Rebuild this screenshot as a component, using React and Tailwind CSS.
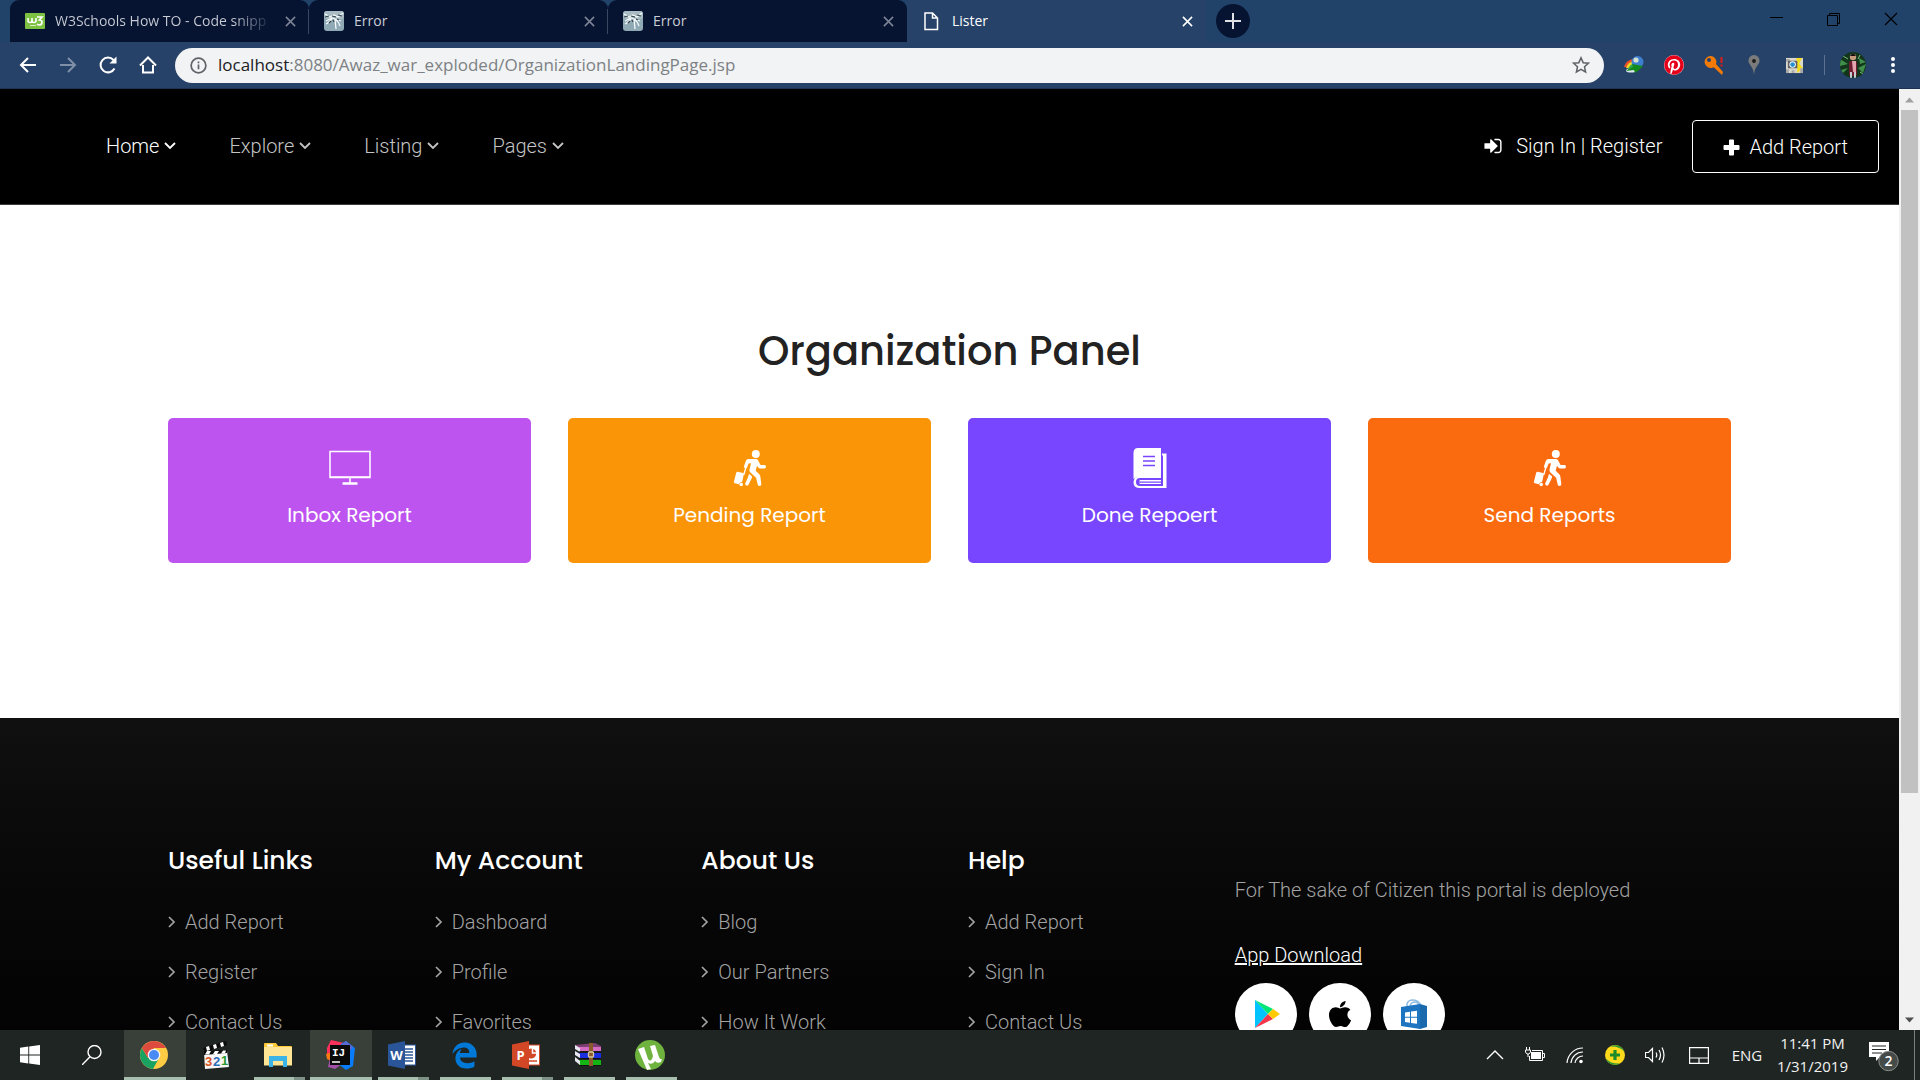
import React from 'react';
import { FaApple, FaEdgeLegacy, FaPinterest } from 'react-icons/fa';

/* ---------- Browser chrome icons ---------- */

function W3Favicon() {
  return (
    <svg viewBox="0 0 20 16" className="h-4 w-5 shrink-0">
      <rect width="20" height="16" rx="1" fill="#7cc142" />
      <path d="M3 5v2.500q0 2 2 2t2-2V5v2.500q0 2 2 2t2-2V5" fill="none" stroke="#fff" strokeWidth="1.600" />
      <path d="M12 4h5l-2.500 3q2.500 0 2.500 2.300T14.500 12q-1.500 0-2.500-1" fill="none" stroke="#fff" strokeWidth="1.700" />
      <path d="M5 12.500h6" stroke="#d7efbd" strokeWidth="1" />
    </svg>
  );
}

function ServerFavicon() {
  return (
    <svg viewBox="0 0 20 20" className="h-5 w-5 shrink-0">
      <rect width="20" height="20" rx="3" fill="#8fa9b5" />
      <rect width="20" height="8" rx="3" fill="#a9bcc4" />
      <path d="M1 3l5 3 4-2 4 2 5-4M2 10l6-3 3 1 6 2M8 8q-4 4-6 5M11 8l1 10M12 9q3 2 4 6" fill="none" stroke="#f4fafb" strokeWidth="1.300" />
      <path d="M1 6l4-1M8 5l4 1M14 4l4 1M5 12l2-2M9 9l1 2M13 8l2 1" stroke="#34454e" strokeWidth="1.200" />
    </svg>
  );
}

function PageFavicon() {
  return (
    <svg viewBox="0 0 20 20" className="h-5 w-5 shrink-0" fill="none" stroke="#fff" strokeWidth="1.500">
      <path d="M3 2h7.500l5 5v11.500H3zM10.500 2v5h5" />
    </svg>
  );
}

function CloseX({ className }) {
  return (
    <svg viewBox="0 0 12 12" className={className} stroke="currentColor" strokeWidth="1.700" fill="none">
      <path d="M1 1l10 10M11 1L1 11" />
    </svg>
  );
}

function NavIcon({ children, label, dim }) {
  return (
    <button type="button" aria-label={label} className={dim ? 'flex w-10 justify-center text-[#7f90a8]' : 'flex w-10 justify-center text-white'}>
      <svg viewBox="0 0 20 20" className="h-5 w-5" fill="none" stroke="currentColor" strokeWidth="2">
        {children}
      </svg>
    </button>
  );
}

const TABS = [
  { title: 'W3Schools How TO - Code snipp', icon: <W3Favicon />, fade: true },
  { title: 'Error', icon: <ServerFavicon /> },
  { title: 'Error', icon: <ServerFavicon /> },
  { title: 'Lister', icon: <PageFavicon />, active: true },
];

function TabStrip() {
  return (
    <div className="flex h-[42px] shrink-0 items-center bg-[#21436a] pl-[10px]">
      {TABS.map((tab, i) => (
        <div
          key={i}
          className={
            tab.active
              ? 'flex h-full w-[299px] items-center bg-[#264268] pr-[13px] pl-[15px] text-white'
              : 'flex h-full w-[299px] items-center rounded-t-[9px] bg-[#071431] pl-[15px] pr-[13px] text-[#c9cdd6]'
          }
        >
          {tab.icon}
          <span className="ml-[10px] min-w-0 flex-1 text-sm leading-5 whitespace-nowrap">
            <span className={tab.fade ? 'inline-block bg-linear-to-r from-[#c9cdd6] from-85% to-[#2a3450] bg-clip-text text-transparent' : 'block'}>
              {tab.title}
            </span>
          </span>
          <button type="button" aria-label={'Close ' + tab.title} className={tab.active ? 'ml-3 text-white' : 'ml-3 text-[#7d8496]'}>
            <CloseX className="h-[11px] w-[11px]" />
          </button>
          {i < 2 && <span className="-mr-[13px] ml-3 h-[25px] w-px bg-[#3b4660]" />}
        </div>
      ))}
      <button type="button" aria-label="New tab" className="ml-[10px] flex h-[34px] w-[34px] items-center justify-center rounded-full bg-[#071431]">
        <svg viewBox="0 0 16 16" className="h-4 w-4" stroke="#dfe1e6" strokeWidth="2">
          <path d="M8 0v16M0 8h16" />
        </svg>
      </button>
      <div className="ml-auto flex items-center gap-[43px] pr-[22px] pb-[5px]">
        <button type="button" aria-label="Minimize">
          <svg viewBox="0 0 14 14" className="h-[14px] w-[14px]"><path d="M0 5.500h13" stroke="#000" /></svg>
        </button>
        <button type="button" aria-label="Restore">
          <svg viewBox="0 0 14 14" className="h-[14px] w-[14px]" fill="none" stroke="#000"><path d="M.5 3.500h10v10h-10zM2.500 3.500v-2h10v10h-2" /></svg>
        </button>
        <button type="button" aria-label="Close window">
          <svg viewBox="0 0 14 14" className="h-[14px] w-[14px]" stroke="#000" strokeWidth="1.200"><path d="M1 1l12 12M13 1L1 13" /></svg>
        </button>
      </div>
    </div>
  );
}

function Extension({ label, children }) {
  return (
    <button type="button" aria-label={label} className="flex w-10 justify-center">
      {children}
    </button>
  );
}

function Toolbar() {
  return (
    <div className="flex h-[47px] shrink-0 items-center border-b border-[#1c3351] bg-[#264268] pl-2">
      <NavIcon label="Back"><path d="M18 10H3M10 3l-7 7 7 7" /></NavIcon>
      <NavIcon label="Forward" dim><path d="M2 10h15M10 3l7 7-7 7" /></NavIcon>
      <NavIcon label="Reload">
        <path d="M16.500 13.500A7.400 7.400 0 1 1 15.500 5" />
        <path d="M18.500 1.500v7h-7z" fill="currentColor" stroke="none" />
      </NavIcon>
      <NavIcon label="Home"><path d="M5 10v7.500h10V10M2 10.500l8-8 8 8" /></NavIcon>
      <div className="ml-[7px] flex h-[35px] min-w-0 flex-1 items-center rounded-full bg-[#f1f3f4] pr-[14px] pl-[15px]">
        <svg viewBox="0 0 18 18" className="h-[17px] w-[17px] shrink-0" fill="none" stroke="#5f6368" strokeWidth="1.800">
          <circle cx="9" cy="9" r="7.800" />
          <path d="M9 8v5M9 4.800v1.800" />
        </svg>
        <div className="ml-[11px] flex-1 text-[17px] leading-6 whitespace-nowrap text-[#7d8185]">
          <span className="text-[#202124]">localhost</span>:8080/Awaz_war_exploded/OrganizationLandingPage.jsp
        </div>
        <button type="button" aria-label="Bookmark this page">
          <svg viewBox="0 0 20 20" className="h-[18px] w-[18px]" fill="none" stroke="#5f6368" strokeWidth="1.700">
            <path d="M10 2l2.400 5.400 5.800.6-4.300 4 1.200 5.800L10 14.900l-5.100 2.900 1.200-5.800-4.300-4 5.800-.6z" />
          </svg>
        </button>
      </div>
      <div className="flex items-center pl-[10px]">
        <Extension label="Download manager">
          <svg viewBox="0 0 20 20" className="h-5 w-5">
            <path d="M0 12q2-7 9-8l2 9z" fill="#e8502c" />
            <path d="M2 13q2-6 8-7l2 8z" fill="#f2d821" />
            <path d="M4 14q2-5 7-6v6z" fill="#2fa84f" />
            <ellipse cx="7" cy="15.500" rx="5" ry="2" fill="#dfe8ee" />
            <circle cx="13.500" cy="7" r="6" fill="#3e7fd0" />
            <circle cx="12" cy="5" r="2.600" fill="#d6e2d0" />
            <path d="M8 9l11 2-4 4-4 3-1-3-8 1q3-3 7-4z" fill="#138a1c" />
          </svg>
        </Extension>
        <Extension label="Pinterest">
          <span className="rounded-full bg-white"><FaPinterest className="h-5 w-5 text-[#e60019]" /></span>
        </Extension>
        <Extension label="Key">
          <svg viewBox="0 0 20 20" className="h-5 w-5">
            <path d="M7 1a6 6 0 1 0 2 11.500l1 0 8 7.500 1-3-7-8A6 6 0 0 0 7 1z" fill="#f47a07" />
            <circle cx="5" cy="5" r="2" fill="#264268" />
            <path d="M17.500 2v6M17.500 9.500v2" stroke="#e01b1b" strokeWidth="2" />
          </svg>
        </Extension>
        <Extension label="Location">
          <svg viewBox="0 0 20 20" className="h-5 w-5">
            <path d="M10 0a5.500 5.500 0 0 0-5.500 6C4.500 10 9.500 11 10 20c.5-9 5.500-10 5.500-14A5.500 5.500 0 0 0 10 0z" fill="#7b7b7b" />
            <circle cx="10" cy="6" r="1.900" fill="#1b1b1b" />
          </svg>
        </Extension>
        <Extension label="Map camera">
          <svg viewBox="0 0 18 18" className="h-[17px] w-[17px]">
            <rect y="1" width="18" height="16" fill="#d9d7cc" />
            <path d="M11 1h6l-3 6 4 5-6 5z" fill="#f4dc1f" />
            <path d="M0 2h4v3H0zM0 13h3v4H0zM15 12h3v5h-3zM6 14h3v3H6z" fill="#a9a9a9" />
            <rect x="2" y="4" width="10" height="8" rx="1" fill="#5c6063" />
            <circle cx="7" cy="8" r="3.400" fill="#fff" />
            <circle cx="7" cy="8" r="2.500" fill="#2391d2" />
          </svg>
        </Extension>
        <span className="mx-[10px] h-5 w-px bg-[#5d7290]" />
        <button type="button" aria-label="Profile" className="ml-[5px]">
          <svg viewBox="0 0 26 26" className="h-[26px] w-[26px] overflow-hidden rounded-full">
            <rect width="26" height="26" fill="#12351c" />
            <path d="M0 7l8 5-8 2zM19 6l7 4-6 2zM18 16l8-4-3 9zM1 18l7-2-5 5z" fill="#3f8f4a" />
            <path d="M3 4l5 3M20 3l-2 4M20 20l3 2" stroke="#7cc07a" />
            <rect x="9" y="9" width="8" height="15" rx="2" fill="#6d1d30" />
            <path d="M12 9h4v11h-3z" fill="#e3a4ae" />
            <circle cx="13" cy="5" r="3.200" fill="#c69a7c" />
            <path d="M10 4q3-5 6 0z" fill="#111" />
            <path d="M10 20h2v6h-2zM14 20h2v6h-2z" fill="#c9ccd4" />
          </svg>
        </button>
        <button type="button" aria-label="Menu" className="mr-6 ml-6">
          <svg viewBox="0 0 6 18" className="h-[18px] w-[6px]" fill="#fff">
            <circle cx="3" cy="3" r="2" />
            <circle cx="3" cy="9" r="2" />
            <circle cx="3" cy="15" r="2" />
          </svg>
        </button>
      </div>
    </div>
  );
}

/* ---------- Page ---------- */

const NAV = ['Home', 'Explore', 'Listing', 'Pages'];

function AngleDown() {
  return (
    <svg viewBox="0 0 12 8" className="h-2 w-3" fill="none" stroke="currentColor" strokeWidth="1.800">
      <path d="M1 1l5 5 5-5" />
    </svg>
  );
}

function AngleRight() {
  return (
    <svg viewBox="0 0 8 12" className="h-3 w-2" fill="none" stroke="currentColor" strokeWidth="1.700">
      <path d="M1 1l5 5-5 5" />
    </svg>
  );
}

function SignInIcon() {
  return (
    <svg viewBox="0 0 1792 1792" className="h-5 w-5" fill="currentColor">
      <path d="M1312 896q0 26-19 45l-544 544q-19 19-45 19t-45-19-19-45v-288H192q-26 0-45-19t-19-45V704q0-26 19-45t45-19h448V352q0-26 19-45t45-19 45 19l544 544q19 19 19 45zm352-352v704q0 119-84.500 203.500T1376 1536h-320q-13 0-22.500-9.500t-9.500-22.500q0-4-1-20t-.5-26.500 3-23.500 10-19.500 20.500-6.500h320q66 0 113-47t47-113V544q0-66-47-113t-113-47h-312l-11.500-1-11.500-3-8-5.500-7-9-2-13.500q0-4-1-20t-.5-26.500 3-23.500 10-19.500 20.500-6.500h320q119 0 203.500 84.500T1664 544z" />
    </svg>
  );
}

function PlusIcon() {
  return (
    <svg viewBox="0 0 17 17" className="h-[17px] w-[17px]" fill="currentColor">
      <path d="M7 .5h3q1 0 1 1V6h4.500q1 0 1 1v3q0 1-1 1H11v4.500q0 1-1 1H7q-1 0-1-1V11H1.500q-1 0-1-1V7q0-1 1-1H6V1.500q0-1 1-1z" />
    </svg>
  );
}

function SiteHeader() {
  return (
    <header className="flex items-center border-b border-[#3a3a3a] bg-black py-[31px] pr-5 pl-[106px] text-xl leading-7 font-light text-white">
      <nav className="flex gap-[53px] pb-[2px]">
        {NAV.map((item, i) => (
          <a key={item} href="#" className={i === 0 ? 'flex items-center gap-[5px]' : 'flex items-center gap-[5px] text-[#c4c4c4]'}>
            {item}
            <AngleDown />
          </a>
        ))}
      </nav>
      <a href="#" className="ml-auto flex items-center gap-[13px] pb-[2px]">
        <SignInIcon />
        Sign In | Register
      </a>
      <button type="button" className="ml-[30px] flex items-center gap-[9px] rounded-[4px] border border-white px-[30px] pt-3 pb-[11px]">
        <PlusIcon />
        Add Report
      </button>
    </header>
  );
}

function MonitorIcon() {
  return (
    <svg viewBox="0 0 42 42" className="h-[42px] w-[42px]" fill="none" stroke="#fff" strokeWidth="1.500">
      <path d="M1 4.500h40v26H1zM21 31v5" />
      <path d="M13.500 36.500h15" strokeWidth="2.500" />
      <path d="M1 30h40" />
    </svg>
  );
}

function TravellerIcon() {
  return (
    <svg viewBox="0 0 42 42" className="h-[42px] w-[42px]" fill="#fff">
      <circle cx="26.800" cy="7" r="4" />
      <path d="M19.500 12h7.500q1.300 0 2 1.300l2.600 4.700h4q1.400 0 1.400 1.700t-1.400 1.800h-4.500q-1 0-1.600-.8L28 18.700l-1.300 5.100 3.600 3.400q.8.800 1 2l1 7.800q0 2-1.600 2t-2-1.600l-1.600-6.700-5.700-5.200q-1.300-1.300-.9-3L22 16.200l-2.400.4-1.500 3.900q-.8 1.200-2 .8t-1.200-1.700l2-5.900q.6-1.400 2.600-1.700z" />
      <path d="M20 26.700l3.200 2.900-.9 2.600-2.700 5.400q-.8 1.400-2.300.9t-1-2.200l2.600-5.800z" />
      <path d="M16.700 21l-2 7" fill="none" stroke="#fff" strokeWidth="1.300" />
      <path d="M8.800 24.700l5.200 1.200q1 .4.800 1.400l-1.700 7.700q-2.500 0-3.200 2.200l-4-1q-1.200-.3-1-1.400l2.300-9q.4-1.200 1.600-1.100z" />
      <circle cx="12.200" cy="37.500" r="1.800" />
    </svg>
  );
}

function BookIcon() {
  return (
    <svg viewBox="0 0 42 42" className="h-[42px] w-[42px]" fill="#fff">
      <path d="M9 1h23v29H10q-3 0-5.500 2V6q0-5 4.500-5z" />
      <path d="M33 6.500h4.500V41H11q-6.500 0-6.500-5.500 0-6 6.500-6H32v1.500H11q-4 0-4 4t4 4h23V8.500h-1z" />
      <path d="M11 33h21v1.500H10zM10 35.700h22v1.300H11z" />
      <path d="M14 9.500h12M14 14h12M14 18.500h12" stroke="#7846fe" strokeWidth="1.300" />
    </svg>
  );
}

const CARD = 'flex flex-col items-center gap-3 rounded-[5px] pt-[29px] pb-[34px] text-xl leading-7 text-white';

function PanelCard({ color, icon, label }) {
  return (
    <a href="#" className={`${CARD} ${color}`}>
      {icon}
      <span>{label}</span>
    </a>
  );
}

function OrganizationPanel() {
  return (
    <main className="mx-auto w-full max-w-[1563px] pt-[122px] pb-[155px] font-['Poppins',sans-serif]">
      <h1 className="text-center text-[40px] leading-[48px] font-medium text-[#222]">Organization Panel</h1>
      <div className="mt-[43px] grid grid-cols-4 gap-[37px]">
        <PanelCard color="bg-[#be54ef]" icon={<MonitorIcon />} label="Inbox Report" />
        <PanelCard color="bg-[#fa9508]" icon={<TravellerIcon />} label="Pending Report" />
        <PanelCard color="bg-[#7846fe]" icon={<BookIcon />} label="Done Repoert" />
        <PanelCard color="bg-[#fa6b10]" icon={<TravellerIcon />} label="Send Reports" />
      </div>
    </main>
  );
}

const LINK_COLUMNS = [
  ['Useful Links', ['Add Report', 'Register', 'Contact Us']],
  ['My Account', ['Dashboard', 'Profile', 'Favorites']],
  ['About Us', ['Blog', 'Our Partners', 'How It Work']],
  ['Help', ['Add Report', 'Sign In', 'Contact Us']],
];

function StoreBadge({ label, children }) {
  return (
    <a href="#" aria-label={label} className="flex h-[62px] w-[62px] items-center justify-center rounded-full bg-white">
      {children}
    </a>
  );
}

function SiteFooter() {
  return (
    <footer className="bg-linear-to-b from-[#101010] to-[#030303] to-[320px] pt-[127px] pb-20 text-xl leading-[30px] font-light text-[#a3a3a3]">
      <div className="mx-auto grid w-full max-w-[1563px] grid-cols-6 gap-x-[37px]">
        {LINK_COLUMNS.map(([title, links]) => (
          <section key={title}>
            <h2 className="font-['Poppins',sans-serif] text-[25px] leading-8 font-medium whitespace-nowrap text-white">{title}</h2>
            <ul className="mt-[30px] flex flex-col gap-5">
              {links.map((link) => (
                <li key={link}>
                  <a href="#" className="flex items-center gap-[9px]">
                    <AngleRight />
                    {link}
                  </a>
                </li>
              ))}
            </ul>
          </section>
        ))}
        <section className="col-span-2 pt-[30px]">
          <p>For The sake of Citizen this portal is deployed</p>
          <a href="#" className="mt-[35px] inline-block text-white underline">App Download</a>
          <div className="mt-[13px] flex gap-3">
            <StoreBadge label="Google Play">
              <svg viewBox="0 0 28 28" className="ml-[2px] h-[28px] w-[28px]">
                <path d="M2 0v28l13-14z" fill="#00c3ff" />
                <path d="M2 0l18 9-5 5z" fill="#00e676" />
                <path d="M2 28l18-9-5-5z" fill="#f4364c" />
                <path d="M20 9l7 5-7 5-5-5z" fill="#ffca00" />
              </svg>
            </StoreBadge>
            <StoreBadge label="App Store">
              <FaApple className="h-[30px] w-[30px] text-black" />
            </StoreBadge>
            <StoreBadge label="Microsoft Store">
              <svg viewBox="0 0 28 30" className="h-[30px] w-[28px]">
                <path d="M7 8V5q1-4 6-4 6 0 8 6M10 7q1-4 5-4 3 0 4 4" fill="none" stroke="#8dbbe2" strokeWidth="1.500" />
                <path d="M1 8l19-3v25L1 27z" fill="#1d74c0" />
                <path d="M20 5l7 2v21l-7 2z" fill="#1a69ad" />
                <path d="M5 13.500l5-.7v5H5zM11 12.600l6-.8v6h-6zM5 18.700h5v5l-5-.7zM11 18.700h6v6l-6-.8z" fill="#fff" />
              </svg>
            </StoreBadge>
          </div>
        </section>
      </div>
    </footer>
  );
}

function Scrollbar() {
  return (
    <div aria-hidden="true" className="flex w-[21px] shrink-0 flex-col items-center bg-[#f1f1f1]">
      <svg viewBox="0 0 21 21" className="h-[21px] w-[21px]"><path d="M6 13.500l4.500-5 4.500 5z" fill="#a0a0a0" /></svg>
      <div className="flex w-full flex-1 flex-col px-[2px]">
        <div className="h-[76%] bg-[#c1c1c1]" />
      </div>
      <svg viewBox="0 0 21 21" className="h-[21px] w-[21px]"><path d="M6 8.500l4.500 5 4.500-5z" fill="#505050" /></svg>
    </div>
  );
}

/* ---------- Taskbar ---------- */

function WindowsLogo() {
  return (
    <svg viewBox="0 0 20 20" className="h-5 w-5" fill="#fff">
      <path d="M0 2.800l8.300-1.200v8H0zM9.200 1.500L20 0v9.600H9.200zM0 10.500h8.300v8L0 17.300zM9.200 10.500H20V20L9.200 18.600z" />
    </svg>
  );
}

function SearchIcon() {
  return (
    <svg viewBox="0 0 20 20" className="h-5 w-5" fill="none" stroke="#fff" strokeWidth="1.400">
      <circle cx="12.500" cy="7" r="6.500" />
      <path d="M8 11.700L0 20" />
    </svg>
  );
}

function ChromeIcon() {
  return (
    <svg viewBox="0 0 28 28" className="h-7 w-7">
      <circle cx="14" cy="14" r="14" fill="#fc4" />
      <path d="M1.900 7A14 14 0 0 0 13 28l6-11-5-3-6 3z" fill="#1aa260" />
      <path d="M1.900 7A14 14 0 0 1 26.100 7H14L8 17z" fill="#dd4b3e" />
      <circle cx="14" cy="14" r="6.300" fill="#f4f4f4" />
      <circle cx="14" cy="14" r="5" fill="#4a8af4" />
    </svg>
  );
}

function ClapperIcon() {
  return (
    <svg viewBox="0 0 28 28" className="h-7 w-7">
      <path d="M1 7L24 0l1 4L3 11z" fill="#0b0b0b" />
      <path d="M4 6l3-1 1 4-3 1zM11 4l3-1 1 4-3 1zM18 2l3-1 1 4-3 1z" fill="#fff" />
      <path d="M2 11l23-1 2 16-24 2z" fill="#f7f7f7" />
      <path d="M2 10l23-1v3L2 14z" fill="#0b0b0b" />
      <path d="M5 10l4 0-2 3.500H3zM13 10h4l-2 3h-4zM21 9.500h3l-1 3h-4z" fill="#fff" />
      <g fontFamily="Liberation Sans" fontWeight="700" fontSize="13">
        <text x="3" y="25" fill="#d9541e">3</text>
        <text x="11" y="25" fill="#2b6cb8">2</text>
        <text x="19" y="24" fill="#2a9a2f">1</text>
      </g>
    </svg>
  );
}

function FolderIcon() {
  return (
    <svg viewBox="0 0 28 24" className="h-6 w-7">
      <path d="M0 1q0-1 1-1h11l2 3h13q1 0 1 1v18H0z" fill="#ffc937" />
      <path d="M0 4h28v18.500H0z" fill="#ffe594" />
      <path d="M3 1.500h6v2H3z" fill="#fff" />
      <path d="M5 24V13h18v11h-4v-6h-10v6z" fill="#3cb4e8" />
    </svg>
  );
}

function IntellijIcon() {
  return (
    <svg viewBox="0 0 30 30" className="h-[30px] w-[30px]">
      <path d="M2 8L6 0l13 3-5 12-12 2z" fill="#fe315d" />
      <path d="M1 14l9-3v12l-8-4z" fill="#f97a12" />
      <path d="M5 18l12 6-7 5-7-2z" fill="#a24fa8" />
      <path d="M16 4l5-3 9 7-2 18-7 4-9-7z" fill="#087cfa" />
      <path d="M17 4l4-3 7 6-5 6z" fill="#5b6ad0" />
      <rect x="5" y="5" width="20" height="20" fill="#0a0a0a" />
      <path d="M7 22h8" stroke="#fff" strokeWidth="1.500" />
      <text x="7" y="16" fontFamily="Liberation Mono" fontWeight="700" fontSize="11" fill="#fff">IJ</text>
    </svg>
  );
}

function OfficeIcon({ letter, color, children }) {
  return (
    <svg viewBox="0 0 28 28" className="h-7 w-7">
      <rect x="14" y="4" width="13.500" height="20" fill="#fff" stroke={color} />
      {children}
      <path d="M0 3.500L17 0v28L0 24.500z" fill={color} />
      <text x="8.500" y="19" textAnchor="middle" fontFamily="Open Sans" fontWeight="700" fontSize="13" fill="#fff">{letter}</text>
    </svg>
  );
}

function WinrarIcon() {
  return (
    <svg viewBox="0 0 28 24" className="h-6 w-7">
      <path d="M1 2l20-2 6 3v4L5 8z" fill="#7d3f72" />
      <path d="M5 4h22v4H5z" fill="#d46cc4" />
      <path d="M5 10h22v5H5z" fill="#1c2fe0" />
      <path d="M5 17h22v5H5z" fill="#13b413" />
      <path d="M1 2l5 3v4L1 6zM1 8l5 3v4L1 12zM1 14l5 4v4l-5-4z" fill="#e8e6f0" />
      <path d="M5 9h22M5 15.500h22M5 22.500h22" stroke="#111" />
      <path d="M15 0h4v23h-4z" fill="#8a5a2a" />
      <rect x="14.500" y="9" width="5" height="5" rx="1" fill="none" stroke="#d9c9a0" strokeWidth="1.300" />
    </svg>
  );
}

function UtorrentIcon() {
  return (
    <svg viewBox="0 0 30 30" className="h-[30px] w-[30px]">
      <circle cx="15" cy="15" r="15" fill="#6fb33f" />
      <path d="M3 9l6-2 4 12q2 3 4 0l1-3-3-10 5-1 4 12q1 3 3 2l-1 3q-4 2-6-1-2 4-7 2l3 6-4 1z" fill="#fff" />
    </svg>
  );
}

function TaskButton({ label, children, active, line }) {
  return (
    <button
      type="button"
      aria-label={label}
      className={active ? 'flex h-full w-[62px] flex-col items-center bg-[#394039]' : 'flex h-full w-[62px] flex-col items-center'}
    >
      <span className="flex flex-1 items-center pt-[3px] pr-[2px]">{children}</span>
      {line === 'full' && <span className="h-[3px] w-full bg-[#a8bfb0]" />}
      {line === 'single' && <span className="h-[3px] w-[51px] bg-[#a8bfb0]" />}
      {line === 'double' && (
        <span className="flex h-[3px] w-[51px]">
          <span className="flex-1 bg-[#a8bfb0]" />
          <span className="w-[11px] bg-[#7e9186]" />
        </span>
      )}
      {!line && <span className="h-[3px] w-full" />}
    </button>
  );
}

function SystemTray() {
  return (
    <div className="ml-auto flex h-full items-center text-[#f2f2f2]">
      <button type="button" aria-label="Show hidden icons" className="flex w-10 justify-center">
        <svg viewBox="0 0 18 18" className="h-[18px] w-[18px]" fill="none" stroke="#fff" strokeWidth="1.400"><path d="M1 13l8-8 8 8" /></svg>
      </button>
      <button type="button" aria-label="Battery" className="flex w-10 justify-center">
        <svg viewBox="0 0 20 16" className="h-4 w-5" fill="none" stroke="#fff">
          <path d="M7 3.500h10.500v10h-13V9M18 6.500h1.500v4H18" />
          <path d="M6 5h10v7H6z" fill="#fff" stroke="none" />
          <path d="M1.500 0v3M4.500 0v3M.5 3h5v2l-1.500 2h-2L.5 5zM3 7v3" />
        </svg>
      </button>
      <button type="button" aria-label="Wi-Fi" className="flex w-10 justify-center">
        <svg viewBox="0 0 18 18" className="h-[18px] w-[18px]" fill="none" stroke="#fff" strokeWidth="1.200">
          <path d="M1 17A16 16 0 0 1 17 2M5 17A12 12 0 0 1 17 6M9 17a8 8 0 0 1 8-7" />
          <circle cx="15" cy="15.500" r="1.200" fill="#fff" />
        </svg>
      </button>
      <button type="button" aria-label="Antivirus" className="flex w-10 justify-center">
        <svg viewBox="0 0 20 20" className="h-5 w-5">
          <circle cx="10" cy="10" r="10" fill="#ffd91c" />
          <path d="M5 1.500A10 10 0 0 1 19.500 7Q15 1 5 1.500zM15 18.500A10 10 0 0 1 .5 13Q5 19 15 18.500z" fill="#2f9a32" />
          <path d="M10 5v10M5 10h10" stroke="#1f8a2a" strokeWidth="3.200" />
        </svg>
      </button>
      <button type="button" aria-label="Volume" className="flex w-10 justify-center">
        <svg viewBox="0 0 20 18" className="h-[18px] w-5" fill="none" stroke="#fff" strokeWidth="1.200">
          <path d="M.5 6.500h3l4-4v13l-4-4h-3zM11 6.500q1.500 2.500 0 5M14 4q3 5 0 10M17 1.500q4 7.500 0 15" />
        </svg>
      </button>
      <button type="button" aria-label="Touchpad" className="flex w-12 justify-center">
        <svg viewBox="0 0 20 17" className="h-[17px] w-5" fill="none" stroke="#fff" strokeWidth="1.200">
          <path d="M.6.6h18.800v15.800H.6zM.6 11h18.800M10 11v5" />
        </svg>
      </button>
      <span className="w-12 text-center text-[15px] leading-5">ENG</span>
      <div className="w-[83px] text-center text-[15px] leading-[23px]">
        <div>11:41 PM</div>
        <div>1/31/2019</div>
      </div>
      <button type="button" aria-label="2 notifications" className="ml-[14px] flex w-[46px]">
        <svg viewBox="0 0 32 34" className="h-[34px] w-8">
          <path d="M1 4h20v15h-9l-4 4v-4H1z" fill="#fff" />
          <path d="M4 8h14M4 11.500h14M4 15h10" stroke="#1f2522" />
          <circle cx="20.500" cy="23" r="9.700" fill="#454b48" stroke="#8b908d" />
          <text x="20.500" y="28" textAnchor="middle" fontFamily="Open Sans" fontWeight="600" fontSize="14" fill="#fff">2</text>
        </svg>
      </button>
      <span className="mr-[5px] h-full w-px bg-[#7b807d]" />
    </div>
  );
}

function Taskbar() {
  return (
    <div className="flex h-[50px] shrink-0 items-center bg-[#1f2522]">
      <TaskButton label="Start"><WindowsLogo /></TaskButton>
      <TaskButton label="Search"><SearchIcon /></TaskButton>
      <TaskButton label="Google Chrome" active line="full"><ChromeIcon /></TaskButton>
      <TaskButton label="Media Player Classic"><ClapperIcon /></TaskButton>
      <TaskButton label="File Explorer" line="double"><FolderIcon /></TaskButton>
      <TaskButton label="IntelliJ IDEA" active line="full"><IntellijIcon /></TaskButton>
      <TaskButton label="Word" line="double">
        <OfficeIcon letter="W" color="#2a5699">
          <path d="M17 8h8M17 11h8M17 14h8M17 17h8M17 20h8" stroke="#2a5699" strokeWidth="1.500" />
        </OfficeIcon>
      </TaskButton>
      <TaskButton label="Microsoft Edge" line="single"><FaEdgeLegacy className="h-[27px] w-[27px] text-[#0078d7]" /></TaskButton>
      <TaskButton label="PowerPoint" line="double">
        <OfficeIcon letter="P" color="#d24726">
          <path d="M17 8a5 5 0 1 1 0 9z" fill="#d24726" />
          <path d="M20.500 6v6h6" fill="none" stroke="#fff" strokeWidth="1.500" />
          <path d="M17 20h8" stroke="#d24726" strokeWidth="1.500" />
        </OfficeIcon>
      </TaskButton>
      <TaskButton label="WinRAR" line="single"><WinrarIcon /></TaskButton>
      <TaskButton label="uTorrent" line="single"><UtorrentIcon /></TaskButton>
      <SystemTray />
    </div>
  );
}

export default function App() {
  return (
    <div className="flex h-screen flex-col overflow-hidden bg-white font-['Segoe_UI','Open_Sans',sans-serif]">
      <TabStrip />
      <Toolbar />
      <div className="flex min-h-0 flex-1">
        <div className="min-w-0 flex-1 overflow-hidden font-['Roboto',sans-serif]">
          <SiteHeader />
          <OrganizationPanel />
          <SiteFooter />
        </div>
        <Scrollbar />
      </div>
      <Taskbar />
    </div>
  );
}
